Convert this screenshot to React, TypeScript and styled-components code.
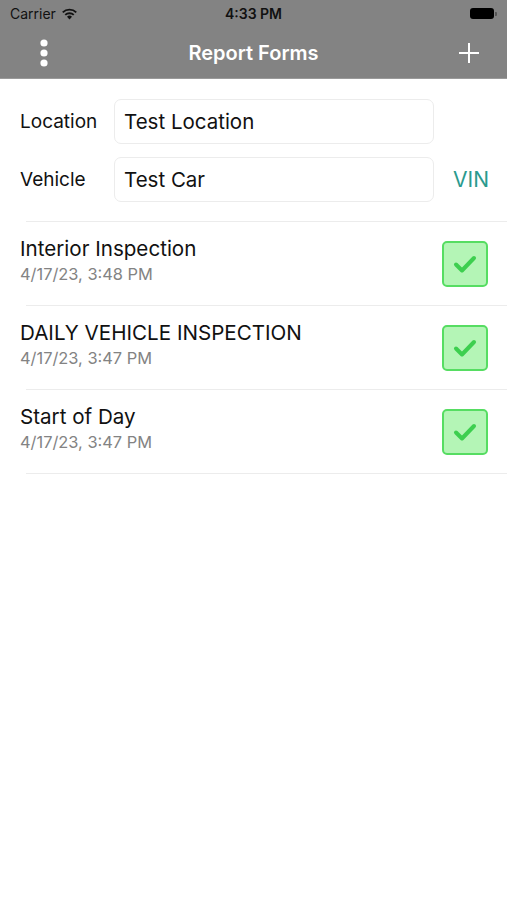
import React from "react";
import styled, { createGlobalStyle } from "styled-components";

const GlobalStyle = createGlobalStyle`
  body {
    margin: 0;
    background: #ffffff;
    font-family: Inter, "Noto Sans", "Liberation Sans", sans-serif;
  }
`;

const Screen = styled.div`
  width: 507px;
  min-height: 900px;
  background: #ffffff;
`;

const Header = styled.div`
  background: #838383;
  border-bottom: 1px solid #9a9a9a;
`;

const StatusBar = styled.div`
  height: 27px;
  display: grid;
  grid-template-columns: 1fr auto 1fr;
  align-items: center;
  padding: 0 10px;
  color: #111;
  font-size: 14px;
`;

const Carrier = styled.div`
  display: flex;
  align-items: center;
  gap: 5px;
`;

const Clock = styled.div`
  font-weight: 600;
`;

const Battery = styled.div`
  justify-self: end;
  display: flex;
  align-items: center;
  gap: 1px;
`;

const BatteryBody = styled.div`
  width: 24px;
  height: 11px;
  border-radius: 3px;
  background: #000;
`;

const BatteryTip = styled.div`
  width: 2px;
  height: 4px;
  border-radius: 0 1px 1px 0;
  background: #555;
`;

const NavBar = styled.div`
  height: 51px;
  display: grid;
  grid-template-columns: 88px 1fr 88px;
  align-items: center;
`;

const NavTitle = styled.div`
  text-align: center;
  color: #ffffff;
  font-size: 20px;
  font-weight: 600;
`;

const NavButton = styled.div<{ $align: "start" | "end" }>`
  display: flex;
  justify-content: ${(p) => (p.$align === "start" ? "flex-start" : "flex-end")};
  padding: ${(p) => (p.$align === "start" ? "0 0 0 36px" : "0 26px 0 0")};
`;

const Form = styled.div`
  padding: 20px 18px 19px 20px;
  display: flex;
  flex-direction: column;
  gap: 13px;
`;

const FieldRow = styled.div`
  display: grid;
  grid-template-columns: 94px 320px 1fr;
  align-items: center;
`;

const FieldLabel = styled.div`
  font-size: 19px;
  color: #111;
`;

const FieldInput = styled.div`
  height: 45px;
  box-sizing: border-box;
  border: 1px solid #ececec;
  border-radius: 7px;
  padding: 0 9px;
  display: flex;
  align-items: center;
  font-size: 20.5px;
  color: #111;
`;

const VinLink = styled.div`
  text-align: right;
  font-size: 21px;
  color: #2a9a8e;
`;

const List = styled.div`
  border-top: 1px solid #ececec;
  margin-left: 26px;
`;

const ItemRow = styled.div`
  height: 84px;
  margin-left: -26px;
  padding: 0 19px 0 20px;
  display: flex;
  align-items: center;
  justify-content: space-between;
  position: relative;
  &::after {
    content: "";
    position: absolute;
    left: 26px;
    right: 0;
    bottom: 0;
    border-bottom: 1px solid #ececec;
  }
`;

const ItemText = styled.div`
  display: flex;
  flex-direction: column;
  gap: 3px;
  margin-bottom: 8px;
`;

const ItemTitle = styled.div`
  font-size: 20.6px;
  color: #111;
`;

const ItemDate = styled.div`
  font-size: 16.4px;
  color: #838383;
`;

const CheckBox = styled.div`
  width: 46px;
  height: 46px;
  box-sizing: border-box;
  border: 2px solid #56dd62;
  border-radius: 5px;
  background: #b4f5b6;
  display: flex;
  align-items: center;
  justify-content: center;
`;

const items = [
  { title: "Interior Inspection", date: "4/17/23, 3:48 PM" },
  { title: "DAILY VEHICLE INSPECTION", date: "4/17/23, 3:47 PM" },
  { title: "Start of Day", date: "4/17/23, 3:47 PM" },
];

const App: React.FC = () => {
  return (
    <Screen>
      <GlobalStyle />
      <Header>
        <StatusBar>
          <Carrier>
            Carrier
            <svg width="17" height="12" viewBox="0 0 17 12">
              <path d="M8.5 11.5 L6 8.7 A3.6 3.6 0 0 1 11 8.7 Z" fill="#111" />
              <path d="M3.6 6.3 A7 7 0 0 1 13.4 6.3 L12.1 7.6 A5.2 5.2 0 0 0 4.9 7.6 Z" fill="#111" />
              <path d="M1.1 3.8 A10.5 10.5 0 0 1 15.9 3.8 L14.6 5.1 A8.7 8.7 0 0 0 2.4 5.1 Z" fill="#111" />
            </svg>
          </Carrier>
          <Clock>4:33 PM</Clock>
          <Battery>
            <BatteryBody />
            <BatteryTip />
          </Battery>
        </StatusBar>
        <NavBar>
          <NavButton $align="start">
            <svg width="16" height="30" viewBox="0 0 16 30">
              <circle cx="8" cy="5" r="3.6" fill="#fff" />
              <circle cx="8" cy="15" r="3.6" fill="#fff" />
              <circle cx="8" cy="25" r="3.6" fill="#fff" />
            </svg>
          </NavButton>
          <NavTitle>Report Forms</NavTitle>
          <NavButton $align="end">
            <svg width="24" height="24" viewBox="0 0 24 24">
              <path d="M12 2 V22 M2 12 H22" stroke="#fff" strokeWidth="2" />
            </svg>
          </NavButton>
        </NavBar>
      </Header>

      <Form>
        <FieldRow>
          <FieldLabel>Location</FieldLabel>
          <FieldInput>Test Location</FieldInput>
          <div />
        </FieldRow>
        <FieldRow>
          <FieldLabel>Vehicle</FieldLabel>
          <FieldInput>Test Car</FieldInput>
          <VinLink>VIN</VinLink>
        </FieldRow>
      </Form>

      <List>
        {items.map((item, i) => (
          <ItemRow key={i}>
            <ItemText>
              <ItemTitle>{item.title}</ItemTitle>
              <ItemDate>{item.date}</ItemDate>
            </ItemText>
            <CheckBox>
              <svg width="32" height="32" viewBox="0 0 32 32">
                <path
                  d="M7 16.5 L13 22.5 L25 10"
                  fill="none"
                  stroke="#3dcf4f"
                  strokeWidth="4"
                  strokeLinecap="round"
                  strokeLinejoin="round"
                />
              </svg>
            </CheckBox>
          </ItemRow>
        ))}
      </List>
    </Screen>
  );
};

export default App;
